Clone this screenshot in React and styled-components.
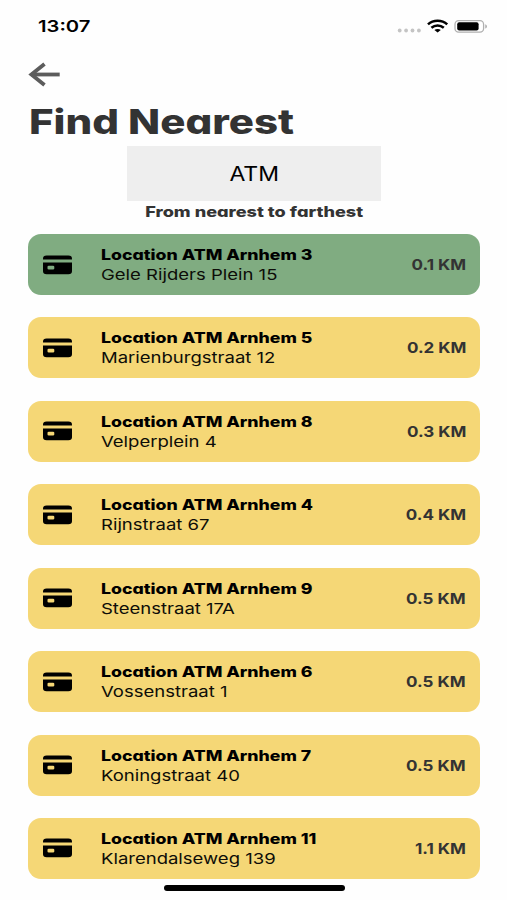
import React from "react"
import styled, { createGlobalStyle } from "styled-components";

const GlobalStyle = createGlobalStyle`
  * {
    box-sizing: border-box;
  }
  body {
    margin: 0;
    background-color: #fefefe;
    font-family: Inter, "Liberation Sans", sans-serif;
  }
`;

const Screen = styled.div`
  height: 900px;
  padding: 0px 27px 0px 28px;
  display: flex;
  flex-direction: column;
  overflow: hidden;
  position: relative;
`;

// every label is set wide, the stretch prop says how much
const Wide = styled.span`
  display: inline-block;
  white-space: nowrap;
  transform: scaleX(${(props) => props.$stretch});
  transform-origin: ${(props) => props.$from || "left"} center;
`;

const StatusBar = styled.div`
  height: 53px;
  padding: 0px 0px 0px 10px;
  display: flex;
  justify-content: space-between;
`;

const Time = styled(Wide)`
  font-size: 16.3px;
  font-weight: 600;
  line-height: 53px;
  color: black;
`;

const StatusIcons = styled.svg`
  width: 94px;
  height: 53px;
  margin-right: -9px;
`;

const BackButton = styled.button`
  width: 34px;
  height: 44px;
  padding: 0;
  border: none;
  background: none;
  display: flex;
  align-items: center;
  cursor: pointer;
`;

const Title = styled.h1`
  margin: 0;
  height: 49px;
  padding-left: 1px;
  font-size: 34px;
  font-weight: 800;
  line-height: 50px;
  color: #333;
  font-feature-settings: "cv11";
`;

const Picker = styled.div`
  width: 254px;
  height: 55px;
  margin-left: 99px;
  display: flex;
  align-items: center;
  justify-content: center;
  background-color: #eee;
  font-size: 19.7px;
  color: black;
`;

const Subtitle = styled.div`
  height: 33px;
  text-align: center;
  font-size: 14.5px;
  font-weight: 800;
  line-height: 21px;
  color: #333;
  font-feature-settings: "cv11";
`;

const List = styled.div`
  display: flex;
  flex-direction: column;
  gap: 22.43px;
`;

const Row = styled.div`
  height: 61px;
  width: 452px;
  flex-shrink: 0;
  padding: 0px 14px 0px 15px;
  border-radius: 13px;
  display: flex;
  align-items: center;
  background-color: ${(props) => (props.$nearest ? "#80ac81" : "#f5d776")};
`;

const CardIcon = styled.svg`
  width: 29px;
  height: 20px;
  margin-right: 29px;
`;

const Info = styled.div`
  flex: 1;
  padding-top: 2px;
  display: flex;
  flex-direction: column;
  align-items: flex-start;
`;

const Name = styled(Wide)`
  font-size: 14.7px;
  font-weight: 800;
  line-height: 19px;
  color: black;
  font-feature-settings: "cv11";
`;

const Street = styled(Wide)`
  font-size: 15px;
  line-height: 20px;
  color: #0d0d08;
`;

const Distance = styled(Wide)`
  font-size: 15px;
  font-weight: 700;
  color: #333;
`;

const HomeBar = styled.div`
  position: absolute;
  left: 164px;
  top: 885px;
  width: 181px;
  height: 6px;
  border-radius: 3px;
  background-color: black;
`;

const locations = [
  { number: "3", street: "Gele Rijders Plein 15", km: "0.1" },
  { number: "5", street: "Marienburgstraat 12", km: "0.2" },
  { number: "8", street: "Velperplein 4", km: "0.3" },
  { number: "4", street: "Rijnstraat 67", km: "0.4" },
  { number: "9", street: "Steenstraat 17A", km: "0.5" },
  { number: "6", street: "Vossenstraat 1", km: "0.5" },
  { number: "7", street: "Koningstraat 40", km: "0.5" },
  { number: "11", street: "Klarendalseweg 139", km: "1.1" },
]

const Status = () => (
  <StatusIcons viewBox="0 0 94 53">
    <g fill="#c4c4c4">
      <circle cx="4.7" cy="30.5" r="1.9" />
      <circle cx="11.1" cy="30.5" r="1.9" />
      <circle cx="17.5" cy="30.5" r="1.9" />
      <circle cx="23.9" cy="30.5" r="1.9" />
    </g>
    <g fill="none" stroke="black" strokeWidth="2.6">
      <path d="M33 24.4C38.3 19.6 46.9 19.6 52.2 24.4" />
      <path d="M36.4 27.8C40 24.8 45.2 24.8 48.8 27.8" />
    </g>
    <path d="M39.4 30.1C41.2 28.6 44 28.6 45.8 30.1L42.6 32.6Z" fill="black" />
    <rect x="60" y="20.6" width="28.6" height="11.6" rx="3.6" fill="white" stroke="#b0b0b0" strokeWidth="1.3" />
    <rect x="62.2" y="22.3" width="21.4" height="8.2" rx="2" fill="black" />
    <path d="M90.3 24.2C92.4 25 92.4 27.8 90.3 28.6Z" fill="#a5a5a5" />
  </StatusIcons>
)

const Location = ({ item, nearest }) => (
  <Row $nearest={nearest}>
    <CardIcon viewBox="0 0 29 20">
      <path d="M0 4.6V3.6Q0 .6 3.6 .6H25.4Q29 .6 29 3.6V4.6Z" />
      <path
        fillRule="evenodd"
        d="M0 7.6H29V16.2Q29 19.2 25.4 19.2H3.6Q0 19.2 0 16.2ZM5.8 10.8Q4.5 10.8 4.5 11.8V13.4Q4.5 14.4 5.8 14.4H10Q11.3 14.4 11.3 13.4V11.8Q11.3 10.8 10 10.8Z"
      />
    </CardIcon>
    <Info>
      <Name $stretch={1.205}>Location ATM Arnhem {item.number}</Name>
      <Street $stretch={1.233}>{item.street}</Street>
    </Info>
    <Distance $stretch={1.135} $from="right">{item.km} KM</Distance>
  </Row>
)

const App = () => {
  return (
    <Screen>
      <GlobalStyle />
      <StatusBar>
        <Time $stretch={1.24}>13:07</Time>
        <Status />
      </StatusBar>
      <BackButton aria-label="Back">
        <svg width="34" height="26" viewBox="0 0 34 26" fill="none" stroke="#5c5c5c" strokeWidth="3.8">
          <path d="M31.7 12.5H3" />
          <path d="M16.5 2L3.4 12.5L16.5 23" />
        </svg>
      </BackButton>
      <Title>
        <Wide $stretch={1.235}>Find Nearest</Wide>
      </Title>
      <Picker>
        <Wide $stretch={1.17} $from="center">ATM</Wide>
      </Picker>
      <Subtitle>
        <Wide $stretch={1.25} $from="center">From nearest to farthest</Wide>
      </Subtitle>
      <List>
        {locations.map((item, index) => (
          <Location key={item.number} item={item} nearest={index === 0} />
        ))}
      </List>
      <HomeBar />
    </Screen>
  )
}
export default App
